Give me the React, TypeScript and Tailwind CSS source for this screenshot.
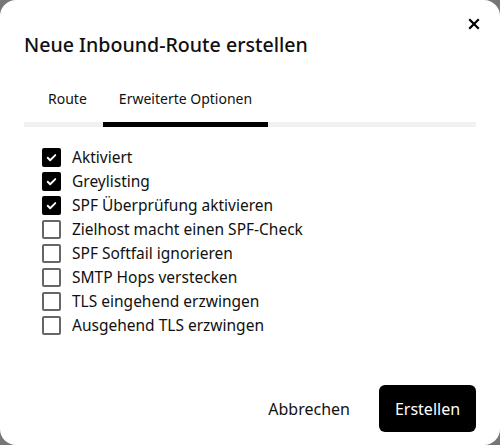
import React from "react";

const items: [string, boolean][] = [
  ["Aktiviert", true],
  ["Greylisting", true],
  ["SPF Überprüfung aktivieren", true],
  ["Zielhost macht einen SPF-Check", false],
  ["SPF Softfail ignorieren", false],
  ["SMTP Hops verstecken", false],
  ["TLS eingehend erzwingen", false],
  ["Ausgehend TLS erzwingen", false],
];

function Box({ checked }: { checked: boolean }) {
  if (checked) {
    return (
      <span className="flex h-[19px] w-[19px] items-center justify-center rounded-[2px] bg-black">
        <svg width="13" height="13" viewBox="0 0 24 24" fill="none" stroke="white" strokeWidth="3.5" strokeLinecap="round" strokeLinejoin="round">
          <path d="M5 12.5l4.5 4.5L19 7.5" />
        </svg>
      </span>
    );
  }
  return <span className="h-[19px] w-[19px] rounded-[2px] border-2 border-[#666666] bg-white" />;
}

export default function App() {
  return (
    <div className="h-[445px] w-[500px] bg-[#767676]" style={{ fontFamily: '"Noto Sans", sans-serif' }}>
      <div className="relative flex h-full w-full flex-col rounded-[16px] bg-white">
        <button className="absolute right-[18px] top-[16px] flex h-[16px] w-[16px] items-center justify-center text-black">
          <svg width="12" height="12" viewBox="0 0 12 12" stroke="black" strokeWidth="2.2" strokeLinecap="square">
            <path d="M2 2L10 10M10 2L2 10" />
          </svg>
        </button>
        <h2 className="pl-6 pt-[31px] text-[19.6px] font-medium leading-[28px] text-[#111]">
          Neue Inbound-Route erstellen
        </h2>
        <div className="mx-6 mt-[30px] flex border-b-[5px] border-[#f1f1f1]">
          <div className="flex w-[79px] pl-[24px] pb-[13px] text-[14px] leading-[20px] text-[#111]">Route</div>
          <div className="-mb-[5px] flex w-[165px] justify-center border-b-[5px] border-black pb-[13px] text-[14px] leading-[20px] text-[#111]">
            Erweiterte Optionen
          </div>
        </div>
        <div className="ml-[42px] mt-[18px] flex flex-col">
          {items.map(([label, checked]) => (
            <label key={label} className="flex h-[24px] items-center gap-[11px]">
              <Box checked={checked} />
              <span className="text-[15.5px] leading-[20px] text-[#111]">{label}</span>
            </label>
          ))}
        </div>
        <div className="mt-auto flex items-center justify-end gap-[12px] px-6 pb-[13px]">
          <button className="h-[47px] px-[17px] text-[16px] text-[#111]">Abbrechen</button>
          <button className="h-[47px] w-[97px] rounded-[6px] bg-black text-[16px] text-white">Erstellen</button>
        </div>
      </div>
    </div>
  );
}
